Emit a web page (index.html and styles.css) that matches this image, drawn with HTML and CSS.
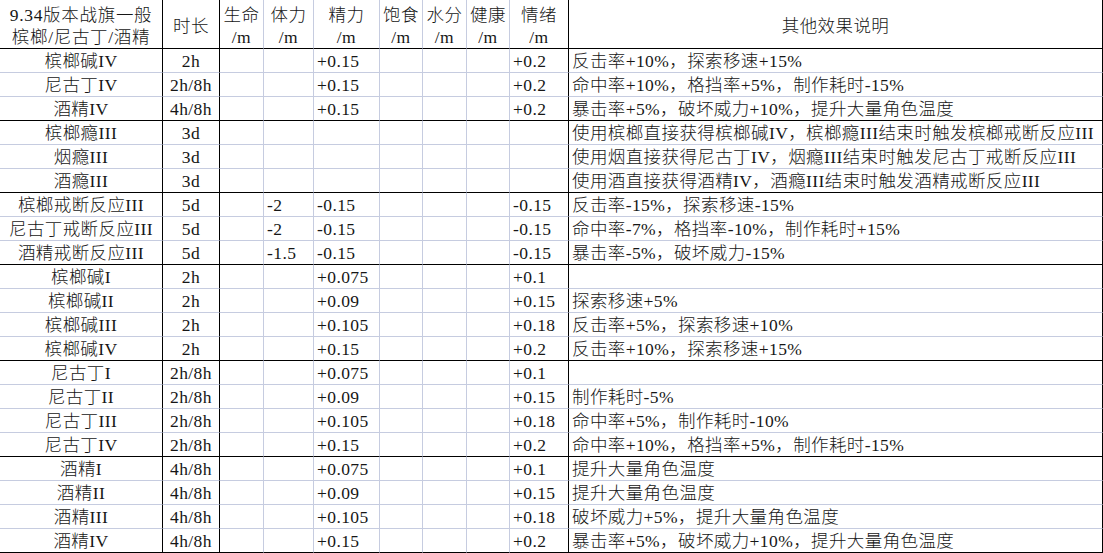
FILE: index.html
```html
<!DOCTYPE html>
<html lang="zh-CN">
<head>
<meta charset="utf-8">
<title>9.34版本战旗一般 槟榔/尼古丁/酒精</title>
<link rel="stylesheet" href="styles.css">
</head>
<body>
<table class="sheet">
  <colgroup>
    <col class="w-name"><col class="w-time"><col class="w-hp"><col class="w-sta"><col class="w-en"><col class="w-food"><col class="w-water"><col class="w-health"><col class="w-mood"><col class="w-fx">
  </colgroup>
  <thead>
    <tr class="head end">
      <th class="name">9.34版本战旗一般<br>槟榔/尼古丁/酒精</th>
      <th class="time">时长</th>
      <th>生命<br>/m</th>
      <th>体力<br>/m</th>
      <th>精力<br>/m</th>
      <th>饱食<br>/m</th>
      <th>水分<br>/m</th>
      <th>健康<br>/m</th>
      <th class="mood">情绪<br>/m</th>
      <th class="fx">其他效果说明</th>
    </tr>
  </thead>
  <tbody>
    <tr><td class="name">槟榔碱IV</td><td class="time">2h</td><td></td><td></td><td>+0.15</td><td></td><td></td><td></td><td class="mood">+0.2</td><td class="fx">反击率+10%，探索移速+15%</td></tr>
    <tr><td class="name">尼古丁IV</td><td class="time">2h/8h</td><td></td><td></td><td>+0.15</td><td></td><td></td><td></td><td class="mood">+0.2</td><td class="fx">命中率+10%，格挡率+5%，制作耗时-15%</td></tr>
    <tr class="end"><td class="name">酒精IV</td><td class="time">4h/8h</td><td></td><td></td><td>+0.15</td><td></td><td></td><td></td><td class="mood">+0.2</td><td class="fx">暴击率+5%，破坏威力+10%，提升大量角色温度</td></tr>

    <tr><td class="name">槟榔瘾III</td><td class="time">3d</td><td></td><td></td><td></td><td></td><td></td><td></td><td class="mood"></td><td class="fx">使用槟榔直接获得槟榔碱IV，槟榔瘾III结束时触发槟榔戒断反应III</td></tr>
    <tr><td class="name">烟瘾III</td><td class="time">3d</td><td></td><td></td><td></td><td></td><td></td><td></td><td class="mood"></td><td class="fx">使用烟直接获得尼古丁IV，烟瘾III结束时触发尼古丁戒断反应III</td></tr>
    <tr class="end"><td class="name">酒瘾III</td><td class="time">3d</td><td></td><td></td><td></td><td></td><td></td><td></td><td class="mood"></td><td class="fx">使用酒直接获得酒精IV，酒瘾III结束时触发酒精戒断反应III</td></tr>

    <tr><td class="name">槟榔戒断反应III</td><td class="time">5d</td><td></td><td>-2</td><td>-0.15</td><td></td><td></td><td></td><td class="mood">-0.15</td><td class="fx">反击率-15%，探索移速-15%</td></tr>
    <tr><td class="name">尼古丁戒断反应III</td><td class="time">5d</td><td></td><td>-2</td><td>-0.15</td><td></td><td></td><td></td><td class="mood">-0.15</td><td class="fx">命中率-7%，格挡率-10%，制作耗时+15%</td></tr>
    <tr class="end"><td class="name">酒精戒断反应III</td><td class="time">5d</td><td></td><td>-1.5</td><td>-0.15</td><td></td><td></td><td></td><td class="mood">-0.15</td><td class="fx">暴击率-5%，破坏威力-15%</td></tr>

    <tr><td class="name">槟榔碱I</td><td class="time">2h</td><td></td><td></td><td>+0.075</td><td></td><td></td><td></td><td class="mood">+0.1</td><td class="fx"></td></tr>
    <tr><td class="name">槟榔碱II</td><td class="time">2h</td><td></td><td></td><td>+0.09</td><td></td><td></td><td></td><td class="mood">+0.15</td><td class="fx">探索移速+5%</td></tr>
    <tr><td class="name">槟榔碱III</td><td class="time">2h</td><td></td><td></td><td>+0.105</td><td></td><td></td><td></td><td class="mood">+0.18</td><td class="fx">反击率+5%，探索移速+10%</td></tr>
    <tr class="end"><td class="name">槟榔碱IV</td><td class="time">2h</td><td></td><td></td><td>+0.15</td><td></td><td></td><td></td><td class="mood">+0.2</td><td class="fx">反击率+10%，探索移速+15%</td></tr>

    <tr><td class="name">尼古丁I</td><td class="time">2h/8h</td><td></td><td></td><td>+0.075</td><td></td><td></td><td></td><td class="mood">+0.1</td><td class="fx"></td></tr>
    <tr><td class="name">尼古丁II</td><td class="time">2h/8h</td><td></td><td></td><td>+0.09</td><td></td><td></td><td></td><td class="mood">+0.15</td><td class="fx">制作耗时-5%</td></tr>
    <tr><td class="name">尼古丁III</td><td class="time">2h/8h</td><td></td><td></td><td>+0.105</td><td></td><td></td><td></td><td class="mood">+0.18</td><td class="fx">命中率+5%，制作耗时-10%</td></tr>
    <tr class="end"><td class="name">尼古丁IV</td><td class="time">2h/8h</td><td></td><td></td><td>+0.15</td><td></td><td></td><td></td><td class="mood">+0.2</td><td class="fx">命中率+10%，格挡率+5%，制作耗时-15%</td></tr>

    <tr><td class="name">酒精I</td><td class="time">4h/8h</td><td></td><td></td><td>+0.075</td><td></td><td></td><td></td><td class="mood">+0.1</td><td class="fx">提升大量角色温度</td></tr>
    <tr><td class="name">酒精II</td><td class="time">4h/8h</td><td></td><td></td><td>+0.09</td><td></td><td></td><td></td><td class="mood">+0.15</td><td class="fx">提升大量角色温度</td></tr>
    <tr><td class="name">酒精III</td><td class="time">4h/8h</td><td></td><td></td><td>+0.105</td><td></td><td></td><td></td><td class="mood">+0.18</td><td class="fx">破坏威力+5%，提升大量角色温度</td></tr>
    <tr class="end"><td class="name">酒精IV</td><td class="time">4h/8h</td><td></td><td></td><td>+0.15</td><td></td><td></td><td></td><td class="mood">+0.2</td><td class="fx">暴击率+5%，破坏威力+10%，提升大量角色温度</td></tr>
  </tbody>
</table>
</body>
</html>
```
FILE: styles.css
```css
html, body {
  margin: 0;
  padding: 0;
  background: #ffffff;
}

body {
  font-family: "Liberation Serif", "Noto Sans CJK SC", serif;
  font-size: 17.5px;
  font-weight: 300;
  color: #161616;
}

.sheet {
  border-collapse: separate;
  border-spacing: 0;
  table-layout: fixed;
  width: 1103px;
}

.w-name { width: 163px; }
.w-time { width: 57px; }
.w-hp { width: 44px; }
.w-sta { width: 50px; }
.w-en { width: 66px; }
.w-food { width: 43px; }
.w-water { width: 44px; }
.w-health { width: 43px; }
.w-mood { width: 59px; }
.w-fx { width: 534px; }

.sheet th,
.sheet td {
  box-sizing: border-box;
  border-right: 1px solid #c6cce0;
  border-bottom: 1px solid #c6cce0;
  padding: 0 0 0 3px;
  white-space: nowrap;
  overflow: hidden;
  vertical-align: middle;
  text-align: left;
  font-weight: 300;
  letter-spacing: 0.4px;
}

.sheet tbody tr {
  height: 24px;
}

.sheet td {
  line-height: 20px;
}

.sheet .head {
  height: 49px;
}

.sheet th {
  text-align: center;
  padding: 4px 0 0 0;
  line-height: 22px;
}

.sheet th.name {
  letter-spacing: 0.7px;
}

.sheet .name,
.sheet .time {
  text-align: center;
  padding-left: 0;
  border-right-color: #000;
}

.sheet .mood {
  border-right-color: #000;
}

.sheet .fx {
  border-right-color: #000;
}

.sheet td.fx {
  padding-left: 3px;
}

.sheet .end th,
.sheet .end td {
  border-bottom-color: #000;
}
```
